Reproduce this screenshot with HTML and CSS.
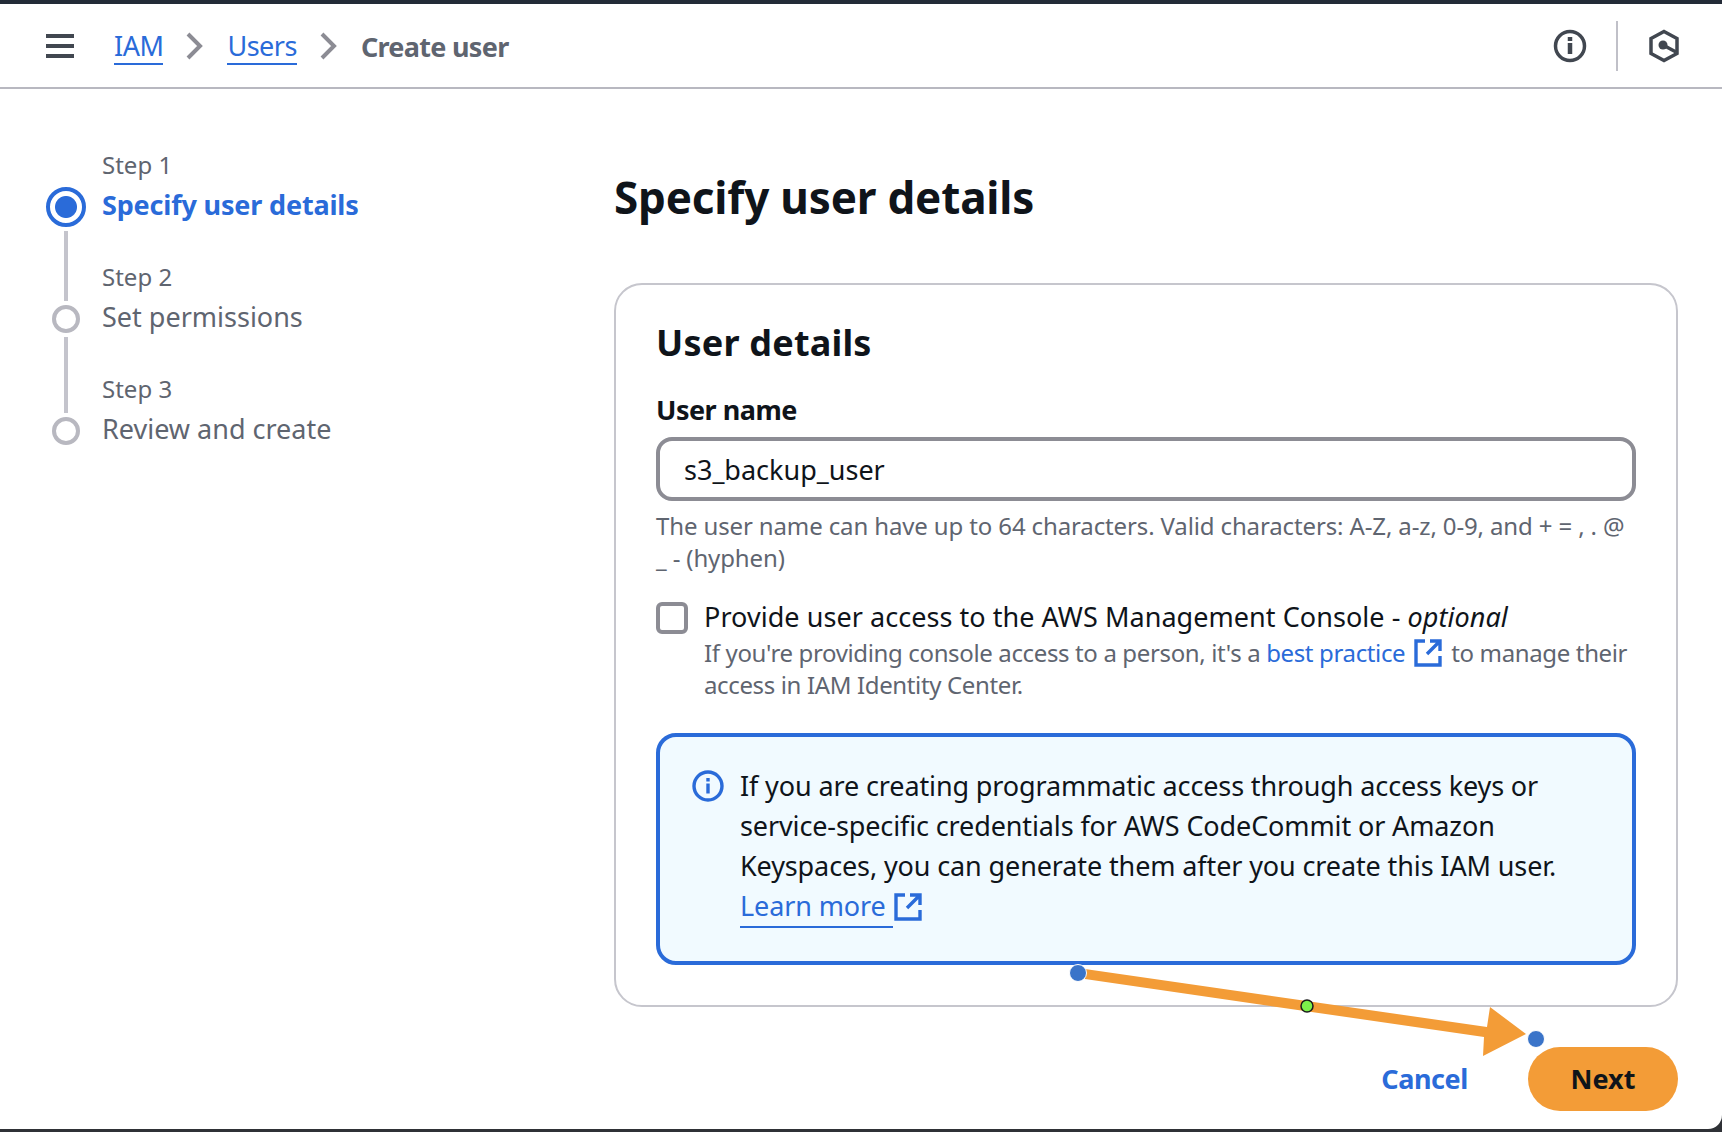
FILE: index.html
```html
<!DOCTYPE html>
<html lang="en">
<head>
<meta charset="utf-8">
<title>Create user</title>
<link rel="stylesheet" href="styles.css">
</head>
<body>
<div class="window">
  <header class="topbar">
    <svg class="menu" width="30" height="26" viewBox="0 0 30 26"><path d="M0 3h28M0 13h28M0 23h28" stroke="#414750" stroke-width="4"/></svg>
    <nav class="crumbs">
      <a class="crumb-link">IAM</a>
      <svg class="chev" width="18" height="28" viewBox="0 0 18 28"><path d="M2 2l12 12L2 26" fill="none" stroke="#8c8c94" stroke-width="4"/></svg>
      <a class="crumb-link">Users</a>
      <svg class="chev" width="18" height="28" viewBox="0 0 18 28"><path d="M2 2l12 12L2 26" fill="none" stroke="#8c8c94" stroke-width="4"/></svg>
      <span class="crumb-current">Create user</span>
    </nav>
    <div class="tools">
      <svg class="info" width="34" height="34" viewBox="0 0 34 34"><circle cx="17" cy="17" r="14.500" fill="none" stroke="#414750" stroke-width="3.500"/><path d="M17 14v11" stroke="#414750" stroke-width="4.500"/><path d="M17 8v4" stroke="#414750" stroke-width="4.500"/></svg>
      <span class="tool-divider"></span>
      <svg width="32" height="34" viewBox="0 0 32 34"><path d="M16 2.500L29 9.500v15L16 31.500 3 24.500v-15z" fill="none" stroke="#414750" stroke-width="3.500"/><circle cx="15" cy="16" r="4.500" fill="#414750"/><path d="M15 16l13 7" stroke="#414750" stroke-width="3.500"/></svg>
    </div>
  </header>

  <main class="content">
    <ol class="steps">
      <li class="step step-active">
        <span class="step-num">Step 1</span>
        <span class="step-title">Specify user details</span>
      </li>
      <li class="step">
        <span class="step-num">Step 2</span>
        <span class="step-title">Set permissions</span>
      </li>
      <li class="step">
        <span class="step-num">Step 3</span>
        <span class="step-title">Review and create</span>
      </li>
    </ol>

    <section class="form">
      <h1 class="page-title">Specify user details</h1>
      <div class="panel">
        <h2 class="panel-title">User details</h2>
        <label class="field-label">User name</label>
        <div class="input">s3_backup_user</div>
        <p class="hint">The user name can have up to 64 characters. Valid characters: A-Z, a-z, 0-9, and + = , . @ _ - (hyphen)</p>
        <div class="check-row">
          <span class="checkbox"></span>
          <div class="check-text">
            <div class="check-label">Provide user access to the AWS Management Console - <em>optional</em></div>
            <p class="check-desc"><span>If you're providing console access to a person, it's a </span><a class="inline-link">best practice</a><svg class="ext ext-inline" width="28" height="28" viewBox="0 0 28 28"><path d="M11 2H2v24h24v-9" fill="none" stroke="#2a6bd9" stroke-width="3.400"/><path d="M16 2h10v10M26 2L13 15" fill="none" stroke="#2a6bd9" stroke-width="3.400"/></svg><span>to manage their</span><br><span>access in IAM Identity Center.</span></p>
          </div>
        </div>
        <div class="notice">
          <svg class="notice-icon" width="32" height="32" viewBox="0 0 32 32"><circle cx="16" cy="16" r="14" fill="none" stroke="#2a6bd9" stroke-width="3.400"/><path d="M16 13.500v10M16 8v3.500" stroke="#2a6bd9" stroke-width="3.400"/></svg>
          <p class="notice-text">If you are creating programmatic access through access keys or service-specific credentials for AWS CodeCommit or Amazon Keyspaces, you can generate them after you create this IAM user.<br><a class="learn">Learn more </a><svg class="ext ext-learn" width="28" height="28" viewBox="0 0 28 28"><path d="M11 2H2v24h24v-9" fill="none" stroke="#2a6bd9" stroke-width="3.400"/><path d="M16 2h10v10M26 2L13 15" fill="none" stroke="#2a6bd9" stroke-width="3.400"/></svg></p>
        </div>
      </div>
      <div class="actions">
        <a class="cancel">Cancel</a>
        <button class="next">Next</button>
      </div>
    </section>
  </main>

  <svg class="annotation" width="1722" height="1132" viewBox="0 0 1722 1132">
    <path d="M1085 969L1487 1027 1490 1007 1526 1034 1483 1056 1484 1037 1085 979z" fill="#f39c37"/>
    <circle cx="1078" cy="973" r="8.500" fill="#3a74c9" stroke="#fff" stroke-width="1"/>
    <circle cx="1307" cy="1006" r="6" fill="#7cf04a" stroke="#1a1a1a" stroke-width="1.500"/>
    <circle cx="1536" cy="1039" r="8.500" fill="#3a74c9" stroke="#fff" stroke-width="1"/>
  </svg>
</div>
</body>
</html>
```

FILE: styles.css
```css
*, *::before, *::after { box-sizing: border-box; }
html, body { margin: 0; height: 100%; }
body {
  background: #2f3136;
  font-family: "Noto Sans", "Open Sans", sans-serif;
  color: #0f141a;
}
.window {
  position: relative;
  width: 1722px;
  height: 1129px;
  background: #fff;
  border-top: 4px solid #232b37;
  border-bottom-right-radius: 14px;
  overflow: hidden;
}
.topbar {
  display: flex;
  align-items: center;
  height: 85px;
  padding: 0 42px 0 46px;
  border-bottom: 2px solid #b8b8c0;
}
.menu { margin-right: 38px; }
.crumbs {
  display: flex;
  align-items: center;
  gap: 23px;
  padding-top: 1px;
  font-size: 27px;
}
.crumb-link {
  color: #2a6bd9;
  border-bottom: 2px solid #2a6bd9;
  line-height: 35px;
  letter-spacing: -0.5px;
}
.crumb-current { color: #5f6570; font-weight: 700; letter-spacing: -0.7px; }
.tools {
  margin-left: auto;
  display: flex;
  align-items: center;
  gap: 30px;
}
.info { margin-right: -1px; }
.tool-divider { width: 2px; height: 50px; background: #c0c0c8; }
.content {
  display: flex;
  padding: 0 44px 0 0;
}
.steps {
  list-style: none;
  margin: 58px 0 0;
  padding: 0 0 0 46px;
  width: 614px;
}
.step {
  position: relative;
  display: flex;
  flex-direction: column;
  padding-left: 56px;
  height: 112px;
}
.step-num { font-size: 24px; line-height: 36px; color: #5f6570; }
.step-title { font-size: 27px; line-height: 44px; color: #5f6570; }
.step-active .step-title { color: #2a6bd9; font-weight: 700; letter-spacing: -0.17px; }
.step::before {
  content: "";
  position: absolute;
  left: 6px;
  top: 46px;
  width: 28px;
  height: 28px;
  border-radius: 50%;
  border: 4px solid #b8b8c0;
  background: #fff;
}
.step-active::before {
  left: 0;
  top: 40px;
  width: 40px;
  height: 40px;
  border: 4px solid #2a6bd9;
  background: radial-gradient(circle, #2a6bd9 0 10.500px, #fff 11.500px);
}
.step:not(:last-child)::after {
  content: "";
  position: absolute;
  left: 18px;
  top: 78px;
  width: 4px;
  height: 76px;
  background: #c4c4cc;
}
.step-active:not(:last-child)::after { top: 84px; height: 70px; }
.form { flex: 1; }
.page-title {
  margin: 80px 0 0;
  font-size: 44px;
  line-height: 56px;
  font-weight: 700;
  letter-spacing: -0.18px;
}
.panel {
  margin-top: 58px;
  height: 724px;
  border: 2px solid #c6c6cd;
  border-radius: 28px;
  padding: 32px 40px 0;
}
.panel-title { margin: 0; font-size: 36px; line-height: 52px; font-weight: 700; letter-spacing: 0.2px; }
.field-label { display: block; margin-top: 23px; font-size: 27px; line-height: 36px; font-weight: 700; letter-spacing: -0.5px; }
.input {
  margin-top: 9px;
  height: 64px;
  border: 4px solid #8c8c94;
  border-radius: 16px;
  padding: 0 24px;
  display: flex;
  align-items: center;
  font-size: 27px;
}
.hint { margin: 9px 0 0; font-size: 24px; line-height: 32px; color: #5f6570; letter-spacing: -0.13px; }
.check-row { display: flex; gap: 16px; margin-top: 25px; }
.check-text { margin-top: -2px; }
.checkbox {
  flex: none;
  width: 32px;
  height: 32px;
  margin-top: 3px;
  border: 4px solid #8c8c94;
  border-radius: 6px;
}
.check-label { font-size: 27px; line-height: 40px; letter-spacing: 0.05px; }
.check-desc { margin: 0; font-size: 24px; line-height: 32px; color: #5f6570; letter-spacing: -0.36px; }
.inline-link { color: #2a6bd9; }
.ext { vertical-align: -5px; }
.ext-inline { margin: 0 9px; }
.ext-learn { margin-left: 1px; }
.notice {
  display: flex;
  gap: 16px;
  margin-top: 32px;
  height: 232px;
  padding: 29px 32px;
  background: #f1faff;
  border: 4px solid #2a6bd9;
  border-radius: 20px;
}
.notice-icon { flex: none; margin-top: 4px; }
.notice-text { margin: 0; font-size: 27px; line-height: 40px; letter-spacing: -0.12px; }
.learn { color: #2a6bd9; border-bottom: 2px solid #2a6bd9; padding-bottom: 2px; }
.actions {
  display: flex;
  justify-content: flex-end;
  align-items: center;
  gap: 60px;
  margin-top: 40px;
}
.cancel { color: #2a6bd9; font-size: 27px; font-weight: 700; letter-spacing: -0.4px; margin-bottom: 2px; }
.next {
  width: 150px;
  height: 64px;
  border: 0;
  border-radius: 32px;
  padding: 0 0 2px;
  background: #f39c37;
  color: #0f141a;
  font: 700 27px "Noto Sans", sans-serif;
}
.annotation { position: absolute; left: 0; top: -4px; pointer-events: none; }
```
